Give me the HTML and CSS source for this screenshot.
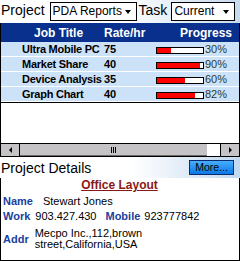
FILE: index.html
```html
<!DOCTYPE html>
<html lang="en">
<head>
  <meta charset="UTF-8">
  <meta name="viewport" content="width=device-width, initial-scale=1.0">
  <title>Project Reports</title>
  <link rel="stylesheet" href="styles.css">
</head>
<body>
  <div class="topbar">
    <span class="lbl">Project</span>
    <div class="select sel-project"><span>PDA Reports</span><i class="caret"></i></div>
    <span class="lbl">Task</span>
    <div class="select sel-task"><span>Current</span><i class="caret"></i></div>
  </div>

  <div class="grid">
    <div class="ghead">
      <span class="c-job">Job Title</span>
      <span class="c-rate">Rate/hr</span>
      <span class="c-prog">Progress</span>
    </div>
    <div class="rows">
      <div class="grow">
        <span class="c-job">Ultra Mobile PC</span>
        <span class="c-rate">75</span>
        <span class="c-prog"><span class="bar"><span class="fill" style="width:30%"></span></span><span class="pct">30%</span></span>
      </div>
      <div class="grow">
        <span class="c-job">Market Share</span>
        <span class="c-rate">40</span>
        <span class="c-prog"><span class="bar"><span class="fill" style="width:94%"></span></span><span class="pct">90%</span></span>
      </div>
      <div class="grow">
        <span class="c-job">Device Analysis</span>
        <span class="c-rate">35</span>
        <span class="c-prog"><span class="bar"><span class="fill" style="width:60%"></span></span><span class="pct">60%</span></span>
      </div>
      <div class="grow">
        <span class="c-job">Graph Chart</span>
        <span class="c-rate">40</span>
        <span class="c-prog"><span class="bar"><span class="fill" style="width:82%"></span></span><span class="pct">82%</span></span>
      </div>
    </div>
    <div class="empty"></div>
    <div class="hscroll">
      <div class="sbtn"><i class="arr-left"></i></div>
      <div class="thumb"><i class="grip"></i></div>
      <div class="track"></div>
      <div class="sbtn sbtn-right"><i class="arr-right"></i></div>
    </div>
  </div>

  <div class="details">
    <div class="dhead">
      <span class="dtitle">Project Details</span>
      <button class="more">More...</button>
    </div>
    <div class="office">Office Layout</div>
    <div class="frow">
      <span class="key">Name</span>
      <span class="val val-name">Stewart Jones</span>
    </div>
    <div class="frow">
      <span class="key">Work</span>
      <span class="val val-work">903.427.430</span>
      <span class="key key-mobile">Mobile</span>
      <span class="val">923777842</span>
    </div>
    <div class="frow frow-addr">
      <span class="key">Addr</span>
      <span class="val val-addr">Mecpo Inc.,112,brown<br>street,California,USA</span>
    </div>
  </div>
</body>
</html>
```

FILE: styles.css
```css
body {
  margin: 0;
  width: 240px;
  height: 261px;
  background: #fff;
  font-family: "Liberation Sans", Arial, sans-serif;
  color: #000;
  overflow: hidden;
}

/* top filter bar */
.topbar {
  height: 23px;
  display: flex;
  align-items: flex-start;
  padding-left: 1px;
  background: linear-gradient(to right, #fff 50%, #c6daee);
  box-sizing: border-box;
}
.lbl {
  font-size: 14px;
  line-height: 21px;
}
.select {
  position: relative;
  height: 19px;
  margin-top: 2px;
  border: 1px solid #000;
  background: #fff;
  box-sizing: border-box;
  font-size: 12px;
  line-height: 17px;
  padding-left: 2px;
}
.sel-project {
  width: 87px;
  margin-left: 5px;
  margin-right: 2px;
}
.sel-task {
  width: 64px;
  margin-left: 4px;
}
.caret {
  position: absolute;
  right: 5px;
  top: 7px;
  border-left: 3px solid transparent;
  border-right: 3px solid transparent;
  border-top: 4px solid #000;
}

/* grid */
.grid {
  border-left: 1px solid #000;
  border-right: 1px solid #000;
}
.ghead,
.grow {
  display: grid;
  grid-template-columns: 103px 52px 1fr;
}
.ghead {
  height: 19px;
  background: #08308c;
  color: #fff;
  font-weight: bold;
  font-size: 12px;
  line-height: 19px;
  padding-top: 1px;
  box-sizing: border-box;
}
.ghead .c-job {
  padding-left: 33px;
}
.ghead .c-prog {
  padding-left: 24px;
}
.rows {
  border-bottom: 1px solid #000;
}
.grow {
  height: 15px;
  background: #cce2f8;
  border-bottom: 1px solid #fff;
  box-sizing: border-box;
  font-weight: bold;
  font-size: 11px;
  line-height: 15px;
}
.grow .c-job {
  padding-left: 21px;
  white-space: nowrap;
  letter-spacing: -0.25px;
}
.grow .c-prog {
  display: flex;
  align-items: center;
}
.bar {
  width: 48px;
  height: 7px;
  border: 1px solid #000;
  background: #fff;
  box-sizing: border-box;
  margin-top: 1px;
}
.fill {
  display: block;
  height: 100%;
  background: #f00;
}
.pct {
  font-weight: normal;
  color: #2b3a2b;
  margin-left: 1px;
}
.empty {
  height: 40px;
}

/* horizontal scrollbar */
.hscroll {
  height: 14px;
  display: flex;
  border-top: 1px solid #000;
  border-bottom: 1px solid #000;
  box-sizing: border-box;
  background: #c6c3c6;
}
.sbtn {
  width: 18px;
  border-right: 1px solid #000;
  display: flex;
  align-items: center;
  justify-content: center;
}
.sbtn-right {
  border-right: none;
  border-left: 1px solid #000;
}
.arr-left {
  border-top: 3px solid transparent;
  border-bottom: 3px solid transparent;
  border-right: 3px solid #000;
}
.arr-right {
  border-top: 3px solid transparent;
  border-bottom: 3px solid transparent;
  border-left: 3px solid #000;
}
.thumb {
  flex: 1;
  display: flex;
  align-items: center;
  justify-content: center;
  border-bottom: 1px solid #6b696b;
}
.grip {
  width: 5px;
  height: 6px;
  background: repeating-linear-gradient(to right, #000 0 1px, transparent 1px 2px);
}
.track {
  width: 13px;
  background: #fff;
}

/* details */
.details {
  height: 104px;
  border: 1px solid #000;
  border-top: none;
  box-sizing: border-box;
}
.dhead {
  height: 21px;
  display: flex;
  align-items: center;
  justify-content: space-between;
  padding: 0 6px 0 1px;
  margin: 0 -1px;
  background: linear-gradient(to right, #fff 55%, #c2d8f0);
}
.dtitle {
  font-size: 14px;
  line-height: 18px;
}
.more {
  width: 45px;
  height: 15px;
  padding: 0;
  border: 1px solid #0a2a70;
  background: linear-gradient(#48aefc, #0a78e6);
  font-family: "Liberation Sans", Arial, sans-serif;
  font-size: 10.5px;
  line-height: 13px;
  color: #000;
}
.office {
  text-align: center;
  font-weight: bold;
  font-size: 12px;
  line-height: 14px;
  color: #8b1818;
  text-decoration: underline;
  margin-bottom: 2px;
  padding-right: 1px;
}
.frow {
  display: flex;
  align-items: center;
  font-size: 11px;
  line-height: 15px;
  padding-left: 2px;
}
.key {
  font-weight: bold;
  color: #1a3f9e;
}
.val-name {
  margin-left: 10px;
}
.val-work {
  margin-left: 5px;
}
.key-mobile {
  margin-left: 9px;
  margin-right: 4px;
}
.frow-addr {
  padding-top: 4px;
}
.val-addr {
  margin-left: 6px;
  line-height: 11px;
}
```
